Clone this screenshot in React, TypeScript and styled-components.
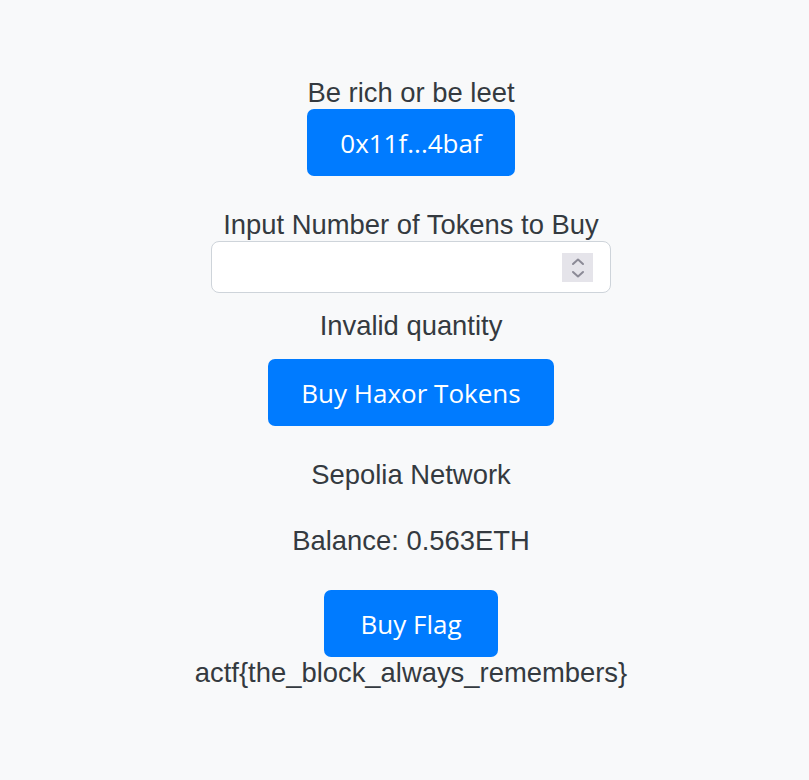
import React from "react";
import styled, { createGlobalStyle } from "styled-components";

const Global = createGlobalStyle`
  html, body { margin: 0; padding: 0; background: #f8f9fa; }
  body { font-family: "Liberation Sans", Arial, sans-serif; color: #343a40; }
`;

const Page = styled.main`
  min-height: 780px;
  display: flex;
  flex-direction: column;
  align-items: center;
  padding-top: 77px;
  padding-left: 13px;
  box-sizing: border-box;
`;

const Label = styled.div<{ $mt?: number }>`
  font-size: 27.4px;
  line-height: 32px;
  margin-top: ${(p) => p.$mt ?? 0}px;
  text-align: center;
`;

const Button = styled.button<{ $w: number; $mt?: number }>`
  width: ${(p) => p.$w}px;
  height: 67px;
  margin-top: ${(p) => p.$mt ?? 0}px;
  background: #007bff;
  color: #fff;
  border: none;
  border-radius: 7px;
  font-family: "Open Sans", "Noto Sans", sans-serif;
  font-size: 26px;
  padding: 0;
  cursor: pointer;
`;

const InputWrap = styled.div`
  position: relative;
  width: 400px;
  height: 52px;
`;

const Field = styled.input`
  width: 100%;
  height: 100%;
  box-sizing: border-box;
  border: 1px solid #ced4da;
  border-radius: 8px;
  background: #fff;
  font-size: 22px;
  padding: 0 16px;
  outline: none;
  appearance: textfield;
  &::-webkit-outer-spin-button,
  &::-webkit-inner-spin-button { -webkit-appearance: none; margin: 0; }
`;

const Spinner = styled.div`
  position: absolute;
  right: 18px;
  top: 12px;
  width: 31px;
  height: 29px;
  background: #e5e4ea;
  display: flex;
  align-items: center;
  justify-content: center;
`;

export default function App() {
  return (
    <>
      <Global />
      <Page>
        <Label>Be rich or be leet</Label>
        <Button $w={208}>0x11f...4baf</Button>
        <Label $mt={33}>Input Number of Tokens to Buy</Label>
        <InputWrap>
          <Field type="number" />
          <Spinner>
            <svg width="16" height="24" viewBox="0 0 16 24" fill="none" stroke="#8b8a96" strokeWidth="2" strokeLinecap="round" strokeLinejoin="round">
              <path d="M3 8 L8 3.5 L13 8" />
              <path d="M3 16 L8 20.5 L13 16" />
            </svg>
          </Spinner>
        </InputWrap>
        <Label $mt={17}>Invalid quantity</Label>
        <Button $w={286} $mt={17}>Buy Haxor Tokens</Button>
        <Label $mt={33}>Sepolia Network</Label>
        <Label $mt={34}>Balance: 0.563ETH</Label>
        <Button $w={174} $mt={33}>Buy Flag</Button>
        <Label>actf{"{the_block_always_remembers}"}</Label>
      </Page>
    </>
  );
}
